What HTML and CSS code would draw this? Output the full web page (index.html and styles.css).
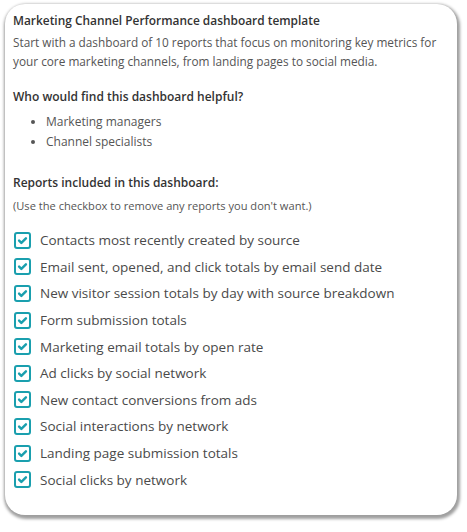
FILE: index.html
```html
<!DOCTYPE html>
<html lang="en">
<head>
<meta charset="utf-8">
<link rel="stylesheet" href="styles.css">
</head>
<body>
<div class="card">
  <h1 class="title">Marketing Channel Performance dashboard template</h1>
  <p class="intro">Start with a dashboard of 10 reports that focus on monitoring key metrics for your core marketing channels, from landing pages to social media.</p>
  <h2 class="heading who">Who would find this dashboard helpful?</h2>
  <ul class="bullets">
    <li>Marketing managers</li>
    <li>Channel specialists</li>
  </ul>
  <h2 class="heading reports">Reports included in this dashboard:</h2>
  <p class="hint">(Use the checkbox to remove any reports you don't want.)</p>
  <ul class="checks">
    <li><span class="box"><svg viewBox="0 0 16 16"><path d="M3.8 8.2l2.8 2.8L12.2 5.4" fill="none" stroke="#1a9fae" stroke-width="3" stroke-linecap="round" stroke-linejoin="round"/></svg></span>Contacts most recently created by source</li>
    <li><span class="box"><svg viewBox="0 0 16 16"><path d="M3.8 8.2l2.8 2.8L12.2 5.4" fill="none" stroke="#1a9fae" stroke-width="3" stroke-linecap="round" stroke-linejoin="round"/></svg></span>Email sent, opened, and click totals by email send date</li>
    <li><span class="box"><svg viewBox="0 0 16 16"><path d="M3.8 8.2l2.8 2.8L12.2 5.4" fill="none" stroke="#1a9fae" stroke-width="3" stroke-linecap="round" stroke-linejoin="round"/></svg></span>New visitor session totals by day with source breakdown</li>
    <li><span class="box"><svg viewBox="0 0 16 16"><path d="M3.8 8.2l2.8 2.8L12.2 5.4" fill="none" stroke="#1a9fae" stroke-width="3" stroke-linecap="round" stroke-linejoin="round"/></svg></span>Form submission totals</li>
    <li><span class="box"><svg viewBox="0 0 16 16"><path d="M3.8 8.2l2.8 2.8L12.2 5.4" fill="none" stroke="#1a9fae" stroke-width="3" stroke-linecap="round" stroke-linejoin="round"/></svg></span>Marketing email totals by open rate</li>
    <li><span class="box"><svg viewBox="0 0 16 16"><path d="M3.8 8.2l2.8 2.8L12.2 5.4" fill="none" stroke="#1a9fae" stroke-width="3" stroke-linecap="round" stroke-linejoin="round"/></svg></span>Ad clicks by social network</li>
    <li><span class="box"><svg viewBox="0 0 16 16"><path d="M3.8 8.2l2.8 2.8L12.2 5.4" fill="none" stroke="#1a9fae" stroke-width="3" stroke-linecap="round" stroke-linejoin="round"/></svg></span>New contact conversions from ads</li>
    <li><span class="box"><svg viewBox="0 0 16 16"><path d="M3.8 8.2l2.8 2.8L12.2 5.4" fill="none" stroke="#1a9fae" stroke-width="3" stroke-linecap="round" stroke-linejoin="round"/></svg></span>Social interactions by network</li>
    <li><span class="box"><svg viewBox="0 0 16 16"><path d="M3.8 8.2l2.8 2.8L12.2 5.4" fill="none" stroke="#1a9fae" stroke-width="3" stroke-linecap="round" stroke-linejoin="round"/></svg></span>Landing page submission totals</li>
    <li><span class="box"><svg viewBox="0 0 16 16"><path d="M3.8 8.2l2.8 2.8L12.2 5.4" fill="none" stroke="#1a9fae" stroke-width="3" stroke-linecap="round" stroke-linejoin="round"/></svg></span>Social clicks by network</li>
  </ul>
</div>
</body>
</html>
```
FILE: styles.css
```css
html, body {
  margin: 0;
  padding: 0;
  background: #ffffff;
}
body {
  padding: 4px 10px 17px 5px;
  font-family: "Open Sans", "DejaVu Sans", sans-serif;
  color: #4f4f4f;
}
.card {
  box-sizing: border-box;
  width: 452px;
  height: 511px;
  background: #ffffff;
  border-radius: 20px;
  box-shadow: 1px 2px 3px 2px rgba(0, 0, 0, 0.38);
  padding: 7px 8px 0 8px;
}
.title {
  margin: 0;
  font-size: 11.9px;
  line-height: 18px;
  font-weight: 600;
  color: #333333;
}
.intro {
  margin: 4px 0 0 0;
  font-size: 11.8px;
  line-height: 19px;
  color: #555555;
}
.heading {
  margin: 0;
  font-size: 12px;
  line-height: 18px;
  font-weight: 600;
  color: #333333;
}
.who {
  margin-top: 17px;
}
.bullets {
  margin: 6px 0 0 0;
  padding: 0 0 0 33px;
  font-size: 12px;
  line-height: 20px;
  color: #555555;
}
.reports {
  margin-top: 22px;
}
.hint {
  margin: 7px 0 0 0;
  font-size: 11.1px;
  line-height: 14px;
  color: #555555;
}
.checks {
  list-style: none;
  margin: 14px 0 0 0;
  padding: 0 0 0 1px;
}
.checks li {
  display: flex;
  align-items: center;
  gap: 9px;
  height: 26.6px;
  font-size: 13.5px;
  color: #4a4a4a;
}
.box {
  box-sizing: border-box;
  flex: 0 0 auto;
  width: 17px;
  height: 17px;
  border: 2px solid #1a9fae;
  border-radius: 3px;
  display: flex;
  align-items: center;
  justify-content: center;
}
.box svg {
  width: 13px;
  height: 13px;
}
```
